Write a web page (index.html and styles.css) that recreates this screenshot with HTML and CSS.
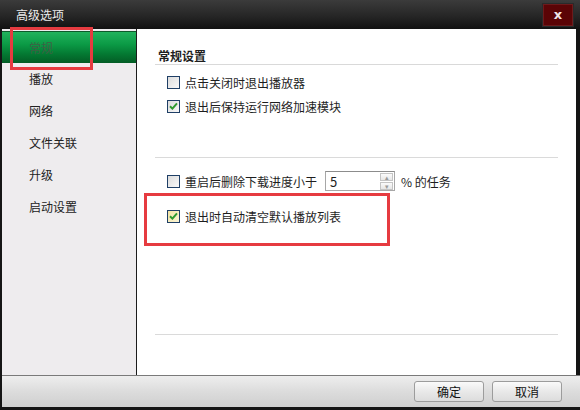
FILE: index.html
```html
<!DOCTYPE html>
<html lang="zh-CN">
<head>
<meta charset="UTF-8">
<title>高级选项</title>
<link rel="stylesheet" href="styles.css">
</head>
<body>
  <div class="window">
    <div class="titlebar">
      <span class="title">高级选项</span>
      <button class="close" type="button">x</button>
    </div>

    <div class="main">
      <ul class="sidebar">
        <li class="active">常规</li>
        <li>播放</li>
        <li>网络</li>
        <li>文件关联</li>
        <li>升级</li>
        <li>启动设置</li>
      </ul>

      <div class="content">
        <h3 class="section-title">常规设置</h3>
        <label class="option">
          <span class="box"></span>点击关闭时退出播放器
        </label>
        <label class="option">
          <span class="box checked">
            <svg width="9" height="8" viewBox="0 0 9 8"><path d="M1 4.2 L3.4 6.6 L8 1.4" fill="none" stroke="#2f9a2f" stroke-width="2"/></svg>
          </span>退出后保持运行网络加速模块
        </label>

        <div class="divider first"></div>

        <div class="option row">
          <span class="box"></span>重启后删除下载进度小于
          <span class="spin">
            <span class="spin-value">5</span>
            <span class="spin-btns">
              <span class="spin-btn">&#9652;</span>
              <span class="spin-btn">&#9662;</span>
            </span>
          </span>
          <span class="unit">% 的任务</span>
        </div>
        <label class="option second">
          <span class="box checked hot">
            <svg width="9" height="8" viewBox="0 0 9 8"><path d="M1 4.2 L3.4 6.6 L8 1.4" fill="none" stroke="#2f9a2f" stroke-width="2"/></svg>
          </span>退出时自动清空默认播放列表
        </label>

        <div class="divider last"></div>
      </div>
    </div>

    <div class="footer">
      <button class="btn" type="button">确定</button>
      <button class="btn" type="button">取消</button>
    </div>

    <!-- marks drawn on top of the dialog -->
    <div class="mark mark-nav"></div>
    <div class="mark mark-option"></div>
  </div>
</body>
</html>
```

FILE: styles.css
```css
body {
  margin: 0;
  background-color: #151515;
  font-family: "Noto Sans CJK SC", "Liberation Sans", sans-serif;
  font-size: 12px;
  color: #1e1e1e;
}
.window {
  position: relative;
  width: 580px;
  height: 410px;
  display: flex;
  flex-direction: column;
  background-color: #151515;
}
.titlebar {
  height: 29px;
  flex: none;
  display: flex;
  align-items: center;
  justify-content: space-between;
  padding: 0 6px 0 16px;
  background: linear-gradient(#3b3b3b, #262626 55%, #121212);
  box-sizing: border-box;
}
.title {
  color: #ececec;
  font-size: 12px;
}
.close {
  width: 32px;
  height: 24px;
  margin-top: 1px;
  border: 1px solid #2a2a2a;
  background: #5b0406;
  box-shadow: inset 0 0 0 1px #6d1a1b;
  color: #f2e6e6;
  font-family: "DejaVu Sans", sans-serif;
  font-weight: bold;
  font-size: 13px;
  line-height: 18px;
  padding: 0;
}

.main {
  flex: 1;
  display: flex;
  border-left: 2px solid #151515;
  border-right: 4px solid #151515;
}
.sidebar {
  list-style: none;
  margin: 0;
  padding: 2px 0 0;
  width: 134px;
  background-color: #eeecee;
  border-right: 1px solid #1c1c1c;
}
.sidebar li {
  height: 32px;
  line-height: 32px;
  padding-left: 27px;
  color: #222;
}
.sidebar li.active {
  background: linear-gradient(#21b25c, #0b9a45 40%, #047a33 70%, #035c25);
  border-top: 1px solid #0d5a2a;
  box-sizing: border-box;
  color: #3e5f45;
}

.content {
  flex: 1;
  background-color: #fff;
  padding: 0 18px;
}
.section-title {
  margin: 19px 0 5px;
  padding-left: 3px;
  font-size: 12px;
  font-weight: bold;
  line-height: 16px;
  border-bottom: 1px solid #d9d9d9;
}
.option {
  display: flex;
  align-items: center;
  height: 24px;
  padding-left: 12px;
}
.box {
  width: 11px;
  height: 11px;
  flex: none;
  margin-right: 5px;
  border: 1px solid #1f3f66;
  background: linear-gradient(135deg, #dcdcdc, #f8f8f8);
  display: flex;
  align-items: center;
  justify-content: center;
}
.box.hot {
  background: linear-gradient(135deg, #f3e3a2, #fbf5d6);
}
.divider {
  border-top: 1px solid #dadada;
}
.divider.first {
  margin-top: 39px;
}
.row {
  margin-top: 11px;
}
.spin {
  display: flex;
  align-items: center;
  width: 70px;
  height: 20px;
  margin-left: 8px;
  border: 1px solid #a7a7a7;
  border-top-color: #8c8c8c;
  box-sizing: border-box;
  background: #fff;
}
.spin-value {
  flex: 1;
  padding-left: 4px;
  font-size: 13px;
}
.spin-btns {
  display: flex;
  flex-direction: column;
  gap: 1px;
  margin-right: 1px;
}
.spin-btn {
  width: 13px;
  height: 8px;
  border: 1px solid #c4c4c4;
  box-sizing: border-box;
  background: linear-gradient(#fbfbfb, #e6e6e6);
  color: #9a9a9a;
  font-size: 7px;
  line-height: 6px;
  text-align: center;
}
.unit {
  margin-left: 6px;
}
.option.second {
  margin-top: 11px;
}
.divider.last {
  margin-top: 106px;
}

.footer {
  height: 32px;
  flex: none;
  display: flex;
  align-items: center;
  justify-content: flex-end;
  gap: 8px;
  padding-right: 18px;
  margin: 0 0 3px 2px;
  border-top: 1px solid #7a7a7a;
  background: linear-gradient(#eeeeee, #dcdcdc 50%, #cfcfcf);
  box-sizing: border-box;
}
.btn {
  width: 70px;
  height: 21px;
  border: 1px solid #9c9c9c;
  border-radius: 3px;
  background: linear-gradient(#fafafa, #e9e9e9 50%, #dcdcdc);
  font-family: "Noto Sans CJK SC", sans-serif;
  font-size: 12px;
  color: #111;
  padding: 0;
}

.mark {
  position: absolute;
  border: 3px solid #e63b40;
  box-sizing: border-box;
}
.mark-nav {
  left: 10px;
  top: 27px;
  width: 83px;
  height: 43px;
}
.mark-option {
  left: 144px;
  top: 193px;
  width: 246px;
  height: 53px;
}
```
